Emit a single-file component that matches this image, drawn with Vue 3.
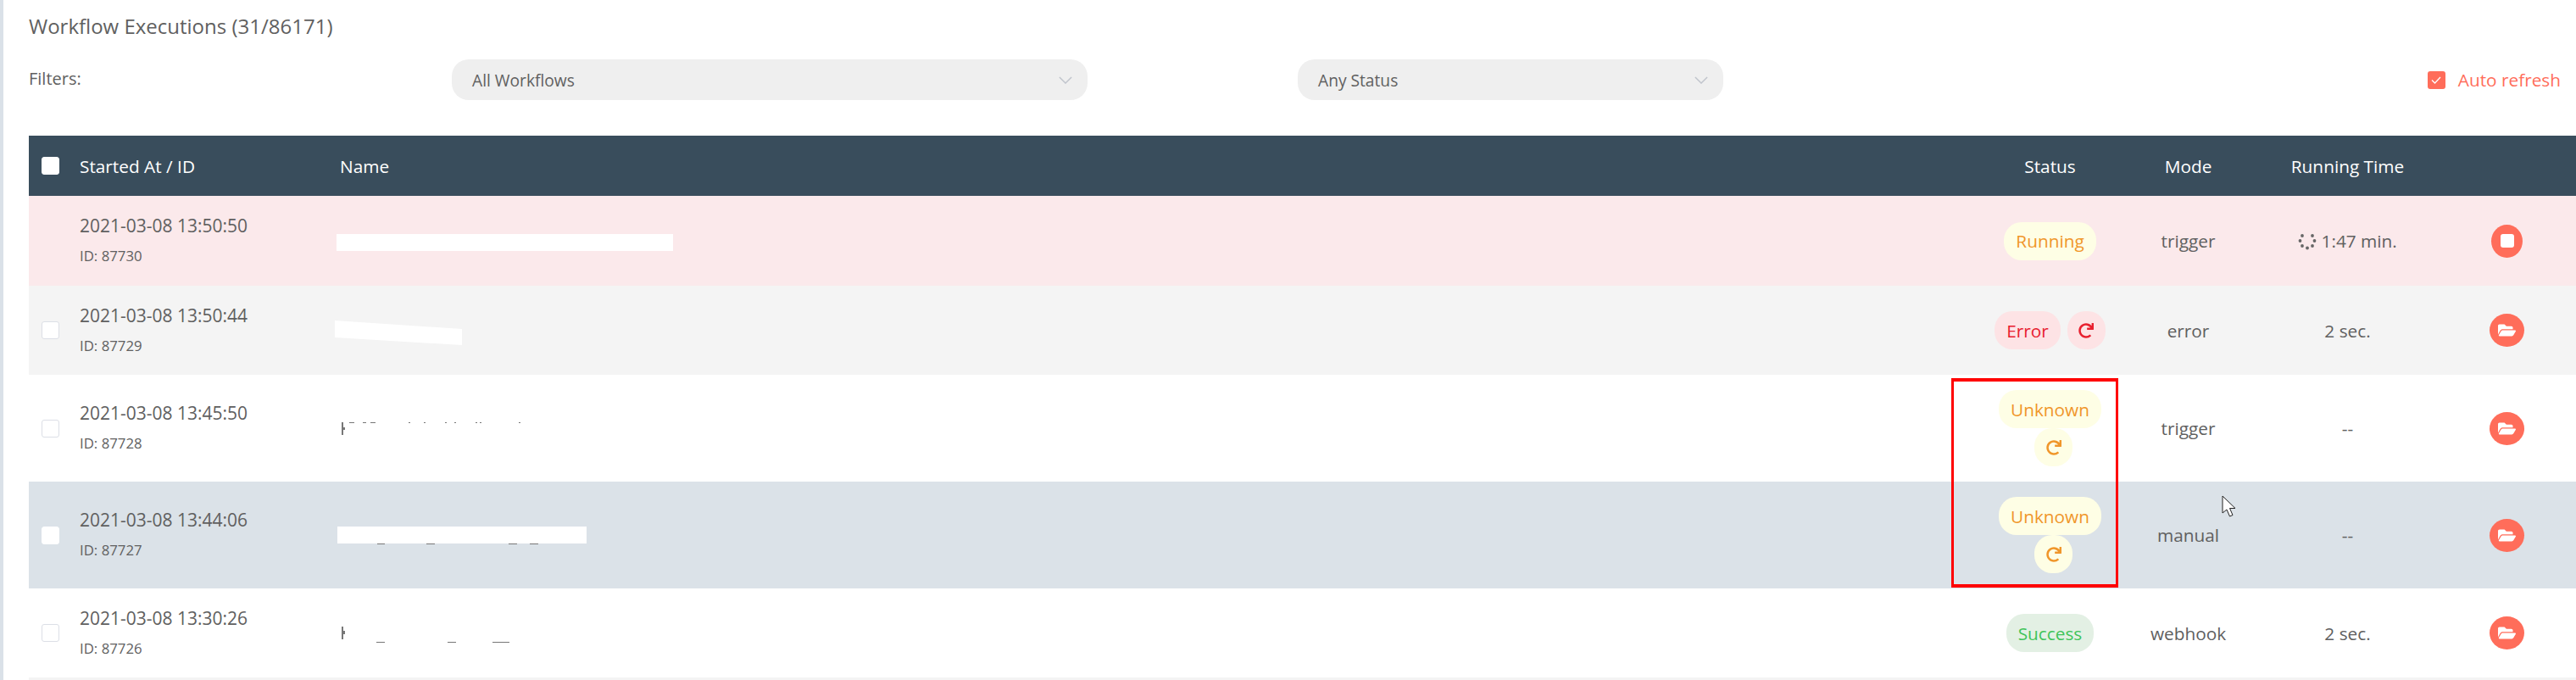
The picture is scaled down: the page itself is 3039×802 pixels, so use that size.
<template>
  <div class="page">
    <h1 class="title">Workflow Executions (31/86171)</h1>

    <div class="filters">
      <span class="filters-label">Filters:</span>
      <div class="select">
        <span>All Workflows</span>
        <svg class="chevron" viewBox="0 0 18 10"><path d="M1 1l8 8 8-8" /></svg>
      </div>
      <span></span>
      <div class="select">
        <span>Any Status</span>
        <svg class="chevron" viewBox="0 0 18 10"><path d="M1 1l8 8 8-8" /></svg>
      </div>
      <label class="auto-refresh">
        <span class="auto-check">
          <svg viewBox="0 0 14 14"><path d="M2 7.500l3.500 3.500L12 4" /></svg>
        </span>
        Auto refresh
      </label>
    </div>

    <div class="table">
      <div class="row head">
        <div class="cell-check"><span class="check on"></span></div>
        <div>Started At / ID</div>
        <div class="name-head">Name</div>
        <div class="center">Status</div>
        <div class="center">Mode</div>
        <div class="center">Running Time</div>
        <div></div>
      </div>

      <div v-for="r in rows" :key="r.id" class="row" :class="r.tone" :style="{ height: r.height + 'px' }">
        <div class="cell-check">
          <span v-if="!r.running" class="check" :class="{ on: r.tone === 'hover' }"></span>
        </div>
        <div class="started">
          <div class="date">{{ r.date }}</div>
          <div class="exec-id">ID: {{ r.id }}</div>
        </div>
        <div class="name">
          <svg :width="420" :height="r.height" :viewBox="`0 0 420 ${r.height}`">
            <polygon v-for="(p, i) in r.masks" :key="i" :points="p" fill="#fff" />
            <rect v-for="(m, i) in r.marks" :key="i" :x="m[0]" :y="m[1]" :width="m[2]" :height="m[3]" fill="#777" />
          </svg>
        </div>
        <div class="status">
          <span class="badge" :class="r.status.toLowerCase()">{{ r.status }}</span>
          <span v-if="r.retry" class="badge retry" :class="r.status.toLowerCase()">
            <svg viewBox="0 0 512 512"><path :d="redoIcon" /></svg>
          </span>
        </div>
        <div class="center">{{ r.mode }}</div>
        <div class="center time">
          <svg v-if="r.running" class="spinner" viewBox="0 0 22 20">
            <circle v-for="(d, i) in spinnerDots" :key="i" :cx="d[0]" :cy="d[1]" r="1.9" />
          </svg>
          {{ r.time }}
        </div>
        <div class="actions">
          <span class="action" :class="{ stop: r.running }">
            <span v-if="r.running" class="stop-square"></span>
            <svg v-else viewBox="0 0 576 512"><path :d="folderIcon" /></svg>
          </span>
        </div>
      </div>

      <div class="row stripe"></div>
    </div>

    <div class="highlight"></div>
    <svg class="cursor" viewBox="0 0 18 28">
      <path d="M1 1v20l5-4 3.500 8 3.500-1.500-3.500-8H16z" fill="#fff" stroke="#222" stroke-width="1" />
    </svg>
  </div>
</template>

<script setup>
const redoIcon =
  'M500.33 0h-47.41a12 12 0 0 0-12 12.57l4 82.76A247.42 247.42 0 0 0 256 8C119.34 8 8.9 119.53 8 256.19 7.1 393.07 117.08 504 256 504a247.1 247.1 0 0 0 166.18-63.91 12 12 0 0 0 .48-17.43l-34-34a12 12 0 0 0-16.38-.55A176 176 0 1 1 402.1 157.8l-101.53-4.87a12 12 0 0 0-12.57 12v47.41a12 12 0 0 0 12 12h200.33a12 12 0 0 0 12-12V12a12 12 0 0 0-12-12z'
const folderIcon =
  'M572.694 292.093L500.27 416.248A63.997 63.997 0 0 1 444.989 448H45.025c-18.523 0-30.064-20.093-20.731-36.093l72.424-124.155A64 64 0 0 1 152 256h399.964c18.523 0 30.064 20.093 20.73 36.093zM152 224h328v-48c0-26.51-21.49-48-48-48H272l-64-64H48C21.49 64 0 85.49 0 112v278.046l69.077-118.418C86.214 242.25 117.989 224 152 224z'

const spinnerDots = [
  [5, 3],
  [2.5, 9],
  [5, 15],
  [11, 17.5],
  [17, 15],
  [19.5, 9],
  [17, 3],
]

// the names were blanked out in the screenshot, what is left are white bars and specks
const rows = [
  {
    id: 87730,
    date: '2021-03-08 13:50:50',
    height: 106,
    tone: 'running',
    running: true,
    status: 'Running',
    mode: 'trigger',
    time: '1:47 min.',
    masks: ['2,45 399,45 399,65 2,65'],
    marks: [],
  },
  {
    id: 87729,
    date: '2021-03-08 13:50:44',
    height: 105,
    tone: 'grey',
    status: 'Error',
    retry: true,
    mode: 'error',
    time: '2 sec.',
    masks: ['0,41 150,51 150,70 0,61'],
    marks: [],
  },
  {
    id: 87728,
    date: '2021-03-08 13:45:50',
    height: 126,
    tone: 'white',
    status: 'Unknown',
    retry: true,
    mode: 'trigger',
    time: '--',
    masks: [],
    marks: [
      [8, 56, 2, 15],
      [10, 62, 2, 3],
      [17, 56, 6, 1],
      [33, 56, 4, 1],
      [42, 56, 6, 1],
      [87, 56, 2, 1],
      [105, 56, 2, 1],
      [130, 56, 2, 1],
      [141, 56, 2, 1],
      [166, 56, 2, 1],
      [171, 56, 2, 1],
      [217, 56, 2, 1],
    ],
  },
  {
    id: 87727,
    date: '2021-03-08 13:44:06',
    height: 126,
    tone: 'hover',
    status: 'Unknown',
    retry: true,
    mode: 'manual',
    time: '--',
    masks: ['3,53 297,53 297,73 3,73'],
    marks: [
      [50, 73, 9, 1],
      [108, 73, 10, 1],
      [205, 73, 10, 1],
      [230, 73, 10, 1],
    ],
  },
  {
    id: 87726,
    date: '2021-03-08 13:30:26',
    height: 105,
    tone: 'white',
    status: 'Success',
    mode: 'webhook',
    time: '2 sec.',
    masks: [],
    marks: [
      [8, 45, 2, 15],
      [10, 50, 2, 4],
      [49, 63, 10, 1],
      [133, 63, 10, 1],
      [186, 63, 20, 1],
    ],
  },
]
</script>

<style>
html,
body {
  margin: 0;
  background: #fff;
  overflow: hidden;
}
</style>

<style scoped>
.page {
  position: relative;
  box-sizing: border-box;
  height: 802px;
  padding-left: 30px;
  border-left: 4px solid #dae1e8;
  overflow: hidden;
  font-family: "Open Sans", sans-serif;
  font-size: 20.8px;
  color: #606060;
}

.title {
  margin: 0;
  padding-top: 13px;
  height: 70px;
  box-sizing: border-box;
  font-size: 24px;
  line-height: 36px;
  font-weight: 400;
}

.filters {
  display: grid;
  grid-template-columns: 499px 750px 248px 502px 1fr;
  align-items: center;
  height: 48px;
  margin-bottom: 42px;
}

.filters-label {
  font-size: 20px;
  margin-top: -4px;
}

.select {
  display: flex;
  align-items: center;
  justify-content: space-between;
  height: 48px;
  padding: 0 18px 0 24px;
  box-sizing: border-box;
  border-radius: 20px;
  background: #efefef;
  font-size: 19.200px;
}

.chevron {
  width: 16px;
  height: 9px;
  fill: none;
  stroke: #c0c4cc;
  stroke-width: 1.6;
}

.auto-refresh {
  display: flex;
  align-items: center;
  justify-content: flex-end;
  gap: 15px;
  padding-right: 18px;
  color: #ff6d5a;
}

.auto-check {
  display: flex;
  align-items: center;
  justify-content: center;
  width: 21px;
  height: 21px;
  border-radius: 3px;
  background: #ff6d5a;
}

.auto-check svg {
  width: 14px;
  height: 14px;
  fill: none;
  stroke: #fff;
  stroke-width: 1.3;
}

.row {
  display: grid;
  grid-template-columns: 60px 301px 1fr 233px 93px 283px 93px;
  align-items: center;
  padding-right: 35px;
}

.head {
  height: 71px;
  background: #394d5c;
  color: #fff;
  font-weight: 500;
}

.name-head {
  padding-left: 6px;
}

.running {
  background: #fbe9eb;
}

.grey {
  background: #f4f4f4;
}

.white {
  background: #fff;
}

.hover {
  background: #dbe2e8;
}

.stripe {
  height: 105px;
  background: #f4f4f4;
}

.center {
  text-align: center;
  white-space: nowrap;
}

.cell-check {
  padding-left: 15px;
}

.check {
  display: block;
  box-sizing: border-box;
  width: 21px;
  height: 21px;
  border: 1px solid #dcdfe6;
  border-radius: 3px;
  background: #fff;
}

.check.on {
  border-color: #fff;
}

.date {
  line-height: 35px;
  font-size: 21px;
}

.exec-id {
  line-height: 35px;
  font-size: 16.800px;
}

.name {
  display: flex;
  height: 100%;
}

.status {
  display: flex;
  flex-wrap: wrap;
  justify-content: center;
  width: 160px;
  justify-self: center;
}

.badge {
  display: flex;
  align-items: center;
  height: 45px;
  padding: 0 14px;
  box-sizing: border-box;
  border-radius: 21px;
}

.retry {
  justify-content: center;
  width: 45px;
  padding: 0;
  margin-left: 8px;
}

.retry svg {
  width: 18px;
  height: 18px;
  fill: currentColor;
}

.running.badge,
.unknown {
  background: #fefee5;
  color: #f0962a;
}

.error {
  background: #fde3e5;
  color: #e8202f;
}

.success {
  background: #e3f0e4;
  color: #3fc45a;
}

.spinner {
  width: 22px;
  height: 20px;
  vertical-align: -3px;
  fill: #666;
}

.actions {
  display: flex;
  justify-content: center;
}

.action {
  display: flex;
  align-items: center;
  justify-content: center;
  width: 41px;
  height: 39px;
  border-radius: 50%;
  background: #ff6d5a;
}

.action.stop {
  width: 37px;
}

.action svg {
  width: 21px;
  height: 19px;
  fill: #fff;
}

.stop-square {
  width: 16px;
  height: 16px;
  border-radius: 3px;
  background: #fff;
}

.highlight {
  position: absolute;
  left: 2298px;
  top: 446px;
  width: 197px;
  height: 247px;
  box-sizing: border-box;
  border: 4px solid #f00;
  border-left-width: 3px;
  border-right-width: 3px;
}

.cursor {
  position: absolute;
  left: 2617px;
  top: 584px;
  width: 18px;
  height: 28px;
}
</style>
